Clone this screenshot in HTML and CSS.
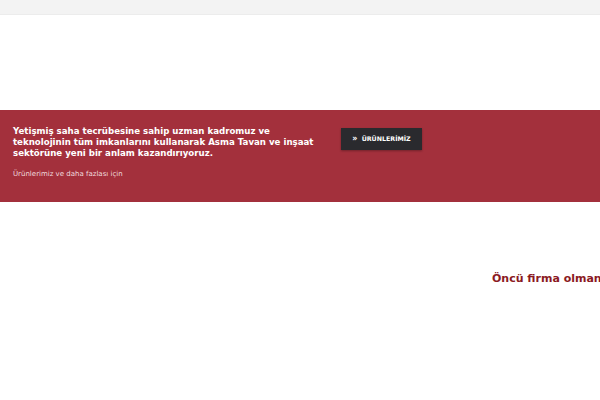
FILE: index.html
```html
<!DOCTYPE html>
<html>
<head>
  <title>Asma Tavan</title>
  <link rel="stylesheet" href="styles.css">
</head>
<body>
  <div class="top-bar"></div>

  <div class="spacer"></div>

  <!-- Call to action band -->
  <div class="cta">
    <div class="cta-text">
      <div class="cta-title">Yetişmiş saha tecrübesine sahip uzman kadromuz ve teknolojinin tüm imkanlarını kullanarak Asma Tavan ve inşaat sektörüne yeni bir anlam kazandırıyoruz.</div>
      <div class="cta-sub">Ürünlerimiz ve daha fazlası için</div>
    </div>
    <div class="cta-action">
      <a href="#" class="cta-button"><span class="arrow">»</span> ÜRÜNLERİMİZ</a>
    </div>
  </div>

  <div class="section">
    <h2 class="section-title">Öncü firma olmanın gururunu yaşıyoruz</h2>
  </div>
</body>
</html>
```
FILE: styles.css
```css
body {
  font-family: "DejaVu Sans", sans-serif;
  margin: 0;
  padding: 0;
  background-color: #fff;
  overflow: hidden;
}

.top-bar {
  height: 14px;
  background-color: #f3f3f3;
  border-bottom: 1px solid #ececec;
}

.spacer {
  height: 95px;
}

.cta {
  background-color: #a3303c;
  height: 92px;
  display: flex;
  box-sizing: border-box;
  padding: 16px 13px 0 13px;
}

.cta-text {
  width: 310px;
}

.cta-title {
  color: #fff;
  font-weight: bold;
  font-size: 8.65px;
  line-height: 11px;
}

.cta-sub {
  color: #f1dcdf;
  font-size: 7px;
  margin-top: 11px;
}

.cta-action {
  padding-left: 18px;
  padding-top: 2px;
}

.cta-button {
  display: block;
  background-color: #2a2a2e;
  color: #fff;
  font-weight: bold;
  font-size: 6.3px;
  text-decoration: none;
  width: 81px;
  height: 22px;
  line-height: 22px;
  text-align: center;
  box-shadow: 0 1px 2px rgba(0, 0, 0, 0.3);
}

.arrow {
  font-size: 8px;
  margin-right: 2px;
}

.section {
  padding-top: 70px;
  padding-left: 492px;
  white-space: nowrap;
}

.section-title {
  margin: 0;
  color: #8b1a1f;
  font-size: 11px;
  font-weight: bold;
}
```
